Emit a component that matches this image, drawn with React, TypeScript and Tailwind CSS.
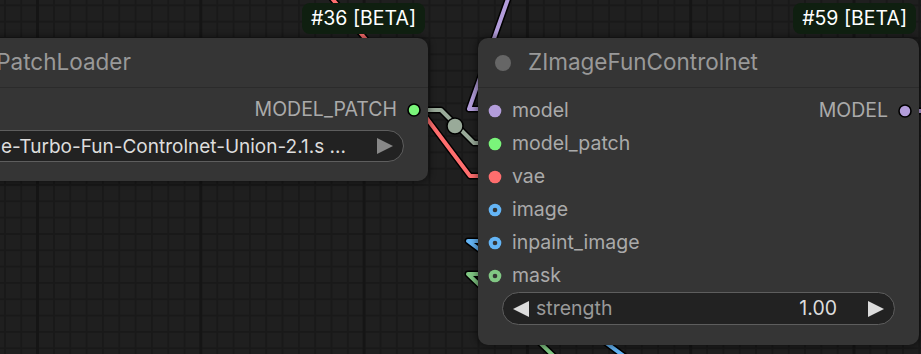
import React from "react";

function Dot({ color, ring = false, outline = false }: { color: string; ring?: boolean; outline?: boolean }) {
  return (
    <svg width="14" height="14" viewBox="0 0 14 14" className="shrink-0">
      <circle cx="7" cy="7" r={outline ? 6 : 6.3} fill={color} stroke={outline ? "#000" : "none"} strokeWidth={outline ? 1.6 : 0} />
      {ring && <circle cx="7" cy="7" r="2.3" fill="#353535" />}
    </svg>
  );
}

function Tri({ dir, color }: { dir: "left" | "right"; color: string }) {
  return (
    <svg width="16" height="16" viewBox="0 0 16 16" className="shrink-0">
      {dir === "right" ? (
        <polygon points="0,0 16,8 0,16" fill={color} />
      ) : (
        <polygon points="16,0 0,8 16,16" fill={color} />
      )}
    </svg>
  );
}

function Wire({ points, color }: { points: string; color: string }) {
  return (
    <>
      <polyline points={points} fill="none" stroke="#000" strokeWidth="7" strokeLinejoin="round" strokeLinecap="round" />
      <polyline points={points} fill="none" stroke={color} strokeWidth="4" strokeLinejoin="round" strokeLinecap="round" />
    </>
  );
}

function InputRow({ color, label, ring = false, children }: { color: string; label: string; ring?: boolean; children?: React.ReactNode }) {
  return (
    <div className="h-[33px] flex items-center pl-[10px] pr-[7px]">
      <Dot color={color} ring={ring} />
      <span className="ml-[10px] text-[19.5px] text-[#aaa] leading-none">{label}</span>
      <div className="flex-1" />
      {children}
    </div>
  );
}

export default function App() {
  return (
    <div className="relative w-[921px] h-[354px] overflow-hidden bg-[#1f1f1f] font-['Inter',sans-serif] [background-image:linear-gradient(to_right,#151515_3px,transparent_3px),linear-gradient(to_right,#191919_2px,transparent_2px),linear-gradient(to_bottom,#191919_2px,transparent_2px)] [background-size:163.3px_100%,16.33px_16.33px,16.33px_16.33px] [background-position:36px_0,4px_0,0_4.4px]">
      {/* links */}
      <svg className="absolute inset-0" width="921" height="354" viewBox="0 0 921 354">
        <Wire points="330,-4 378,54" color="#ff6e6e" />
        <Wire points="398,80 470,176 494,176" color="#ff6e6e" />
        <Wire points="414,110 441,110 474,143 494,143" color="#99aa99" />
        <circle cx="455" cy="126" r="8" fill="#99aa99" stroke="#000" strokeWidth="1.5" />
        <Wire points="509,-4 469,109 494,109" color="#b39ddb" />
        <Wire points="494,241 468,241 632,362" color="#64b5f6" />
        <Wire points="494,274 468,274 560,362" color="#81c784" />
        <Wire points="905,111 930,111" color="#b39ddb" />
      </svg>

      {/* left node */}
      <div className="absolute left-[-200px] top-[38px] w-[628px] h-[143px] rounded-[10px] bg-[#353535] shadow-[0_0_6px_2px_rgba(0,0,0,0.4)] flex flex-col">
        <div className="h-[50px] shrink-0 border-b-[1.5px] border-[#2b2b2b] flex items-center pl-[130px] text-[22.5px] text-[#999] leading-none whitespace-nowrap">
          ModelPatchLoader
        </div>
        <div className="h-[33px] mt-[5px] flex items-center justify-end pr-[7px]">
          <span className="text-[19.5px] text-[#aaa] leading-none">MODEL_PATCH</span>
          <div className="ml-[10px]">
            <Dot color="#7af57a" outline />
          </div>
        </div>
        <div className="mt-[4px] mx-[24px] h-[32px] rounded-full border-[1.5px] border-[#5e5e5e] bg-[#222] flex items-center justify-end pr-[10px] overflow-hidden">
          <span className="whitespace-nowrap text-[19px] text-[#ddd] leading-none">Z-Image-Turbo-Fun-Controlnet-Union-2.1.s ...</span>
          <div className="ml-[31px]">
            <Tri dir="right" color="#888" />
          </div>
        </div>
      </div>

      {/* right node */}
      <div className="absolute left-[478px] top-[38px] w-[441px] h-[307px] rounded-[10px] bg-[#353535] shadow-[0_0_6px_2px_rgba(0,0,0,0.4)] flex flex-col">
        <div className="h-[50px] shrink-0 border-b-[1.5px] border-[#2b2b2b] flex items-center pl-[17px] text-[22.5px] text-[#999] leading-none">
          <div className="w-[16px] h-[16px] rounded-full bg-[#666] shrink-0" />
          <span className="ml-[17px] whitespace-nowrap">ZImageFunControlnet</span>
        </div>
        <div className="pt-[6px] flex flex-col">
          <InputRow color="#b39ddb" label="model">
            <span className="text-[19.5px] text-[#aaa] leading-none">MODEL</span>
            <div className="ml-[10px]">
              <Dot color="#b39ddb" outline />
            </div>
          </InputRow>
          <InputRow color="#7af57a" label="model_patch" />
          <InputRow color="#ff6e6e" label="vae" />
          <InputRow color="#64b5f6" label="image" ring />
          <InputRow color="#64b5f6" label="inpaint_image" ring />
          <InputRow color="#81c784" label="mask" ring />
        </div>
        <div className="mx-[24px] h-[33px] rounded-full border-[1.5px] border-[#5e5e5e] bg-[#222] flex items-center pl-[10px] pr-[10px]">
          <Tri dir="left" color="#ddd" />
          <span className="ml-[7px] text-[19.5px] text-[#999] leading-none">strength</span>
          <div className="flex-1" />
          <span className="text-[19.5px] text-[#ddd] leading-none">1.00</span>
          <div className="ml-[31px]">
            <Tri dir="right" color="#ddd" />
          </div>
        </div>
      </div>

      {/* badges */}
      <div className="absolute right-[496px] top-[3px] h-[31px] px-[9px] rounded-[8px] bg-[#0f1f10] flex items-center text-[19.5px] text-white leading-none whitespace-nowrap">
        #36 [BETA]
      </div>
      <div className="absolute right-[5px] top-[3px] h-[31px] px-[9px] rounded-[8px] bg-[#0f1f10] flex items-center text-[19.5px] text-white leading-none whitespace-nowrap">
        #59 [BETA]
      </div>
    </div>
  );
}
